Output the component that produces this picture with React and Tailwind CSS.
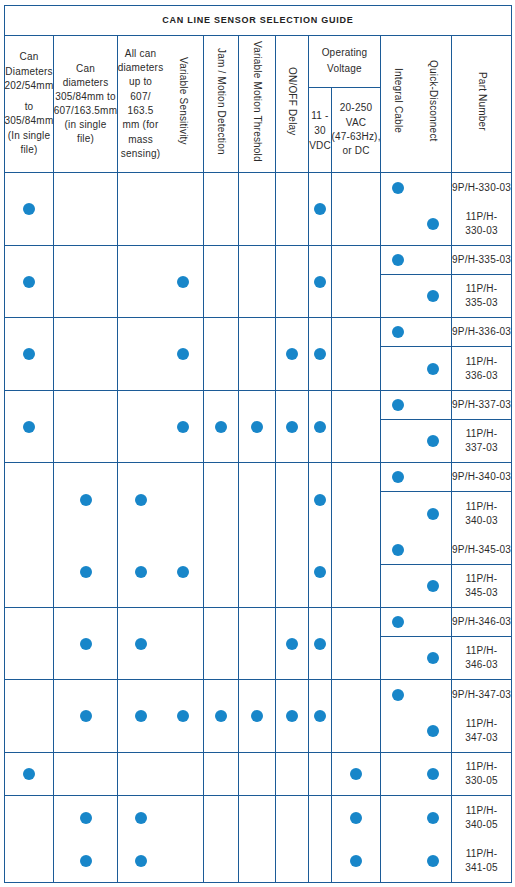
import React from "react";

const B = "border-[#1c5b97]";

const SPAN = { 1: "row-span-1", 2: "row-span-2" };
const LEFT_R = [true, true, false, true, true, true, true, true, true];

const ROWS = [
  { left: { span: 2, bottom: true, dots: [0, 7] }, right: { i: true, part: ["9P/H-330-03"], bottom: false } },
  { right: { q: true, part: ["11P/H-", "330-03"], bottom: true } },
  { left: { span: 2, bottom: true, dots: [0, 3, 7] }, right: { i: true, part: ["9P/H-335-03"], bottom: true } },
  { right: { q: true, part: ["11P/H-", "335-03"], bottom: true } },
  { left: { span: 2, bottom: true, dots: [0, 3, 6, 7] }, right: { i: true, part: ["9P/H-336-03"], bottom: true } },
  { right: { q: true, part: ["11P/H-", "336-03"], bottom: true } },
  { left: { span: 2, bottom: true, dots: [0, 3, 4, 5, 6, 7] }, right: { i: true, part: ["9P/H-337-03"], bottom: true } },
  { right: { q: true, part: ["11P/H-", "337-03"], bottom: true } },
  { left: { span: 2, bottom: false, dots: [1, 2, 7] }, right: { i: true, part: ["9P/H-340-03"], bottom: true } },
  { right: { q: true, part: ["11P/H-", "340-03"], bottom: false } },
  { left: { span: 2, bottom: true, dots: [1, 2, 3, 7] }, right: { i: true, part: ["9P/H-345-03"], bottom: true } },
  { right: { q: true, part: ["11P/H-", "345-03"], bottom: true } },
  { left: { span: 2, bottom: true, dots: [1, 2, 6, 7] }, right: { i: true, part: ["9P/H-346-03"], bottom: true } },
  { right: { q: true, part: ["11P/H-", "346-03"], bottom: true } },
  { left: { span: 2, bottom: true, dots: [1, 2, 3, 4, 5, 6, 7] }, right: { i: true, part: ["9P/H-347-03"], bottom: false } },
  { right: { q: true, part: ["11P/H-", "347-03"], bottom: true } },
  { left: { span: 1, bottom: true, dots: [0, 8] }, right: { q: true, part: ["11P/H-", "330-05"], bottom: true } },
  { left: { span: 1, bottom: false, dots: [1, 2, 8] }, right: { q: true, part: ["11P/H-", "340-05"], bottom: false } },
  { left: { span: 1, bottom: true, dots: [1, 2, 8] }, right: { q: true, part: ["11P/H-", "341-05"], bottom: true } },
];

function Dot() {
  return <span className="block w-3 h-3 rounded-full bg-[#1886c9]" />;
}

function Cell({ className = "", r = true, b = true, children }) {
  return (
    <div
      className={`flex items-center justify-center text-center ${B} ${r ? "border-r" : ""} ${b ? "border-b" : ""} ${className}`}
    >
      {children}
    </div>
  );
}

function Lines({ lines, className = "" }) {
  return (
    <div className={`whitespace-nowrap ${className}`}>
      {lines.map((l, k) => (
        <div key={k}>{l}</div>
      ))}
    </div>
  );
}

function Vert({ children }) {
  return (
    <span className="[writing-mode:vertical-rl] whitespace-nowrap leading-[14px] pb-[6px]">{children}</span>
  );
}

export default function App() {
  const body = [];
  ROWS.forEach((row, idx) => {
    if (row.left) {
      LEFT_R.forEach((r, c) => {
        body.push(
          <Cell key={`l${idx}-${c}`} r={r} b={row.left.bottom} className={SPAN[row.left.span]}>
            {row.left.dots.includes(c) && <Dot />}
          </Cell>
        );
      });
    }
    const rt = row.right;
    body.push(
      <Cell key={`i${idx}`} r={false} b={rt.bottom}>
        {rt.i && <Dot />}
      </Cell>
    );
    body.push(
      <Cell key={`q${idx}`} r={true} b={rt.bottom}>
        {rt.q && <Dot />}
      </Cell>
    );
    body.push(
      <Cell key={`p${idx}`} r={true} b={rt.bottom}>
        <Lines lines={rt.part} className="leading-[14px]" />
      </Cell>
    );
  });

  return (
    <div className="min-h-[887px] bg-white pl-[4px] pt-[5px] font-['Liberation_Sans',Arial,sans-serif] text-[10px] tracking-[0.2px] text-[#2b2b2b]">
      <div
        className={`grid w-[508px] border-t border-l ${B} grid-cols-[49px_64px_45px_41px_35px_37px_33px_23px_49px_33px_38px_60px] grid-rows-[30px_52px_85px_29px_44px_29px_43px_29px_44px_29px_43px_29px_44px_29px_43px_29px_43px_29px_44px_43px_43px_44px]`}
      >
        <Cell className="col-span-12">
          <span className="font-bold text-[9px] tracking-[0.75px] text-[#222]">CAN LINE SENSOR SELECTION GUIDE</span>
        </Cell>

        <Cell className="row-span-2">
          <div className="whitespace-nowrap leading-[14.5px]">
            <div>Can</div>
            <div>Diameters</div>
            <div>202/54mm</div>
            <div className="mt-[6px]">to</div>
            <div>305/84mm</div>
            <div>(In single</div>
            <div>file)</div>
          </div>
        </Cell>
        <Cell className="row-span-2">
          <Lines
            lines={["Can", "diameters", "305/84mm to", "607/163.5mm", "(in single", "file)"]}
            className="leading-[14px]"
          />
        </Cell>
        <Cell className="row-span-2" r={false}>
          <Lines
            lines={["All can", "diameters", "up to", "607/", "163.5", "mm (for", "mass", "sensing)"]}
            className="leading-[14.3px]"
          />
        </Cell>
        <Cell className="row-span-2">
          <Vert>Variable Sensitivity</Vert>
        </Cell>
        <Cell className="row-span-2">
          <Vert>Jam / Motion Detection</Vert>
        </Cell>
        <Cell className="row-span-2">
          <Vert>Variable Motion Threshold</Vert>
        </Cell>
        <Cell className="row-span-2">
          <Vert>ON/OFF Delay</Vert>
        </Cell>
        <Cell className="col-span-2">
          <Lines lines={["Operating", "Voltage"]} className="leading-[15.5px] pb-[2px]" />
        </Cell>
        <Cell className="row-span-2" r={false}>
          <Vert>Integral Cable</Vert>
        </Cell>
        <Cell className="row-span-2">
          <Vert>Quick-Disconnect</Vert>
        </Cell>
        <Cell className="row-span-2">
          <Vert>Part Number</Vert>
        </Cell>
        <Cell>
          <Lines lines={["11 -", "30", "VDC"]} className="leading-[15px]" />
        </Cell>
        <Cell>
          <Lines lines={["20-250", "VAC", "(47-63Hz),", "or DC"]} className="leading-[14.3px]" />
        </Cell>

        {body}
      </div>
    </div>
  );
}
